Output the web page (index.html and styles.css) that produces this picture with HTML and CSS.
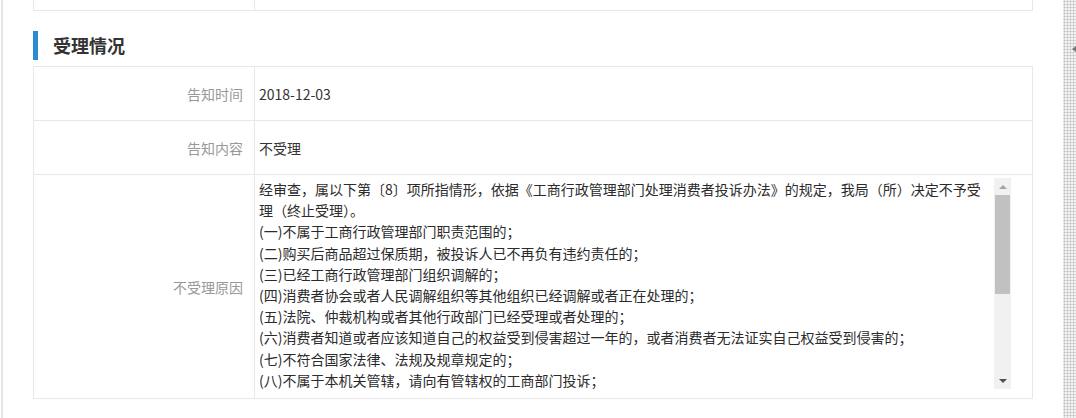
FILE: index.html
```html
<!DOCTYPE html>
<html lang="zh-CN">
<head>
<meta charset="utf-8">
<title>受理情况</title>
<link rel="stylesheet" href="styles.css">
</head>
<body>
<div class="shell">
  <div class="page">
    <div class="table prev">
      <div class="row prev-row">
        <div class="label"></div>
        <div class="value"></div>
      </div>
    </div>

    <h2 class="section-title">受理情况</h2>

    <div class="table">
      <div class="row">
        <div class="label">告知时间</div>
        <div class="value">2018-12-03</div>
      </div>
      <div class="row">
        <div class="label">告知内容</div>
        <div class="value">不受理</div>
      </div>
      <div class="row tall">
        <div class="label">不受理原因</div>
        <div class="value boxed">
          <div class="scrollbox">
            <div class="scroll-content">
              <p>经审查，属以下第〔8〕项所指情形，依据《工商行政管理部门处理消费者投诉办法》的规定，我局（所）决定不予受理（终止受理）。</p>
              <p>(一)不属于工商行政管理部门职责范围的；</p>
              <p>(二)购买后商品超过保质期，被投诉人已不再负有违约责任的；</p>
              <p>(三)已经工商行政管理部门组织调解的；</p>
              <p>(四)消费者协会或者人民调解组织等其他组织已经调解或者正在处理的；</p>
              <p>(五)法院、仲裁机构或者其他行政部门已经受理或者处理的；</p>
              <p>(六)消费者知道或者应该知道自己的权益受到侵害超过一年的，或者消费者无法证实自己权益受到侵害的；</p>
              <p>(七)不符合国家法律、法规及规章规定的；</p>
              <p>(八)不属于本机关管辖，请向有管辖权的工商部门投诉；</p>
            </div>
            <div class="vscroll">
              <div class="vs-btn up"><span class="tri-up"></span></div>
              <div class="vs-track"><div class="vs-thumb"></div></div>
              <div class="vs-btn down"><span class="tri-down"></span></div>
            </div>
          </div>
        </div>
      </div>
    </div>
  </div>
  <div class="page-scroll">
    <div class="page-scroll-arrow"></div>
  </div>
</div>
</body>
</html>
```

FILE: styles.css
```css
html, body {
  margin: 0;
  padding: 0;
  background: #fff;
}

body {
  font-family: "Noto Sans CJK SC", "Noto Sans", sans-serif;
  font-size: 14px;
  color: #333;
  overflow: hidden;
}

.shell {
  display: flex;
  height: 418px;
  overflow: hidden;
}

.page {
  flex: 1;
  margin-left: 1px;
  border-left: 2px solid #e6e6e6;
  padding: 0 30px;
}

.table {
  width: 1000px;
  box-sizing: border-box;
  border: 1px solid #e8e8e8;
  border-bottom: none;
}

.table.prev {
  border-top: none;
}

.row {
  display: grid;
  grid-template-columns: 221px 1fr;
  height: 54px;
  box-sizing: border-box;
  border-bottom: 1px solid #e8e8e8;
}

.row.prev-row {
  height: 11px;
}

.row.tall {
  height: 224px;
}

.label {
  box-sizing: border-box;
  border-right: 1px solid #e8e8e8;
  color: #999;
  text-align: right;
  padding-right: 11px;
  display: flex;
  align-items: center;
  justify-content: flex-end;
}

.value {
  padding-left: 4px;
  display: flex;
  align-items: center;
  color: #333;
}

.value.boxed {
  padding: 3px 0 0 0;
  align-items: flex-start;
}

.section-title {
  margin: 20px 0 6px 0;
  height: 29px;
  line-height: 29px;
  border-left: 5px solid #2a8bd3;
  padding-left: 15px;
  font-size: 18px;
  font-weight: bold;
  color: #333;
}

.scrollbox {
  width: 756px;
  height: 211px;
  display: flex;
}

.scroll-content {
  flex: 1;
  overflow: hidden;
  padding: 1px 7px 0 4px;
  line-height: 21.2px;
  color: #2b2b2b;
}

.scroll-content p {
  margin: 0;
}

.vscroll {
  width: 17px;
  flex: none;
  display: flex;
  flex-direction: column;
  background: #f1f1f1;
}

.vs-btn {
  height: 17px;
  flex: none;
  display: flex;
  align-items: center;
  justify-content: center;
}

.vs-track {
  flex: 1;
  display: flex;
  flex-direction: column;
}

.vs-thumb {
  height: 99px;
  margin: 0 1px;
  background: #c1c1c1;
}

.tri-up {
  width: 0;
  height: 0;
  border-left: 4px solid transparent;
  border-right: 4px solid transparent;
  border-bottom: 4px solid #a3a3a3;
}

.tri-down {
  width: 0;
  height: 0;
  border-left: 4px solid transparent;
  border-right: 4px solid transparent;
  border-top: 4px solid #505050;
}

.page-scroll {
  width: 13px;
  flex: none;
  background-color: #f2f2f2;
  background-image: radial-gradient(circle, #bdbdbd 0.8px, transparent 1.2px);
  background-size: 3px 3px;
  display: flex;
  flex-direction: column;
  align-items: flex-end;
}

.page-scroll-arrow {
  margin-top: 46px;
  width: 0;
  height: 0;
  border-top: 3px solid transparent;
  border-bottom: 3px solid transparent;
  border-right: 4px solid #777;
}
```
